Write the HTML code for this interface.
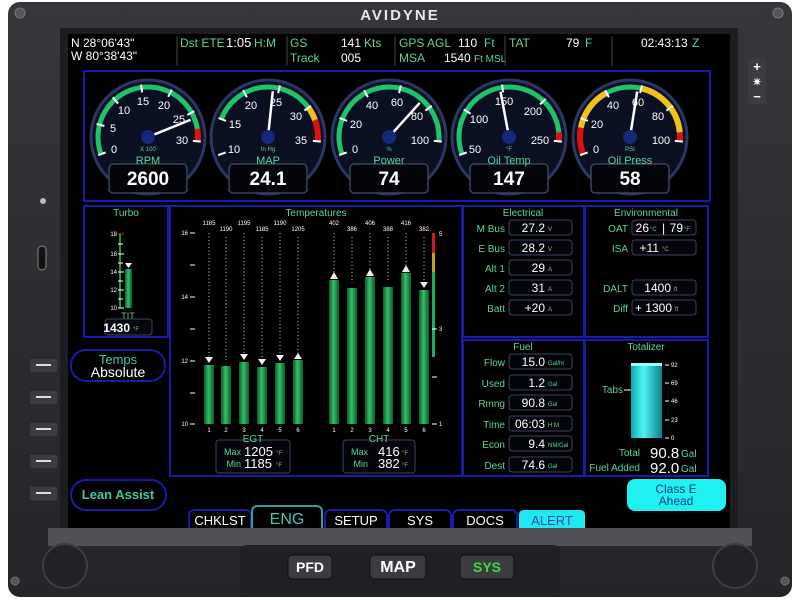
<!DOCTYPE html>
<html><head><meta charset="utf-8"><style>
html,body{margin:0;padding:0;background:#fff;width:800px;height:600px;overflow:hidden}
svg{display:block}
text{font-family:"Liberation Sans Narrow","Liberation Sans",sans-serif}
.g{fill:#5fd394}.w{fill:#fff}.b{font-weight:bold}
</style></head><body>
<svg width="800" height="600" viewBox="0 0 800 600" xmlns="http://www.w3.org/2000/svg">
<defs>
<linearGradient id="bar" x1="0" x2="1" y1="0" y2="0"><stop offset="0" stop-color="#0b5b2c"/><stop offset=".45" stop-color="#31c266"/><stop offset="1" stop-color="#0b5b2c"/></linearGradient>
<linearGradient id="cy" x1="0" x2="1" y1="0" y2="0"><stop offset="0" stop-color="#0aa8b0"/><stop offset=".4" stop-color="#4ff4f4"/><stop offset="1" stop-color="#0a8088"/></linearGradient>
<linearGradient id="bz" x1="0" x2="0" y1="0" y2="1"><stop offset="0" stop-color="#35373b"/><stop offset="1" stop-color="#232528"/></linearGradient>
</defs>
<!-- bezel -->
<rect x="8" y="2" width="784" height="595" rx="12" fill="url(#bz)"/>
<rect x="60" y="28" width="678" height="508" fill="#1c1d20"/>
<rect x="48" y="528" width="704" height="18" fill="#505256"/>
<rect x="240" y="545" width="320" height="48" rx="6" fill="#1e2023"/>
<circle cx="20" cy="13" r="5" fill="#555" stroke="#777"/>
<circle cx="778" cy="13" r="5" fill="#555" stroke="#777"/>
<circle cx="15" cy="581" r="4" fill="#555" stroke="#777"/>
<circle cx="785" cy="581" r="4" fill="#555" stroke="#777"/>
<text x="400" y="20" text-anchor="middle" font-size="15" font-weight="bold" fill="#e8e8e8" letter-spacing="2" style="font-family:'Liberation Sans',sans-serif">AVIDYNE</text>
<circle cx="43" cy="201" r="3" fill="#bbb"/>
<rect x="38" y="246" width="8" height="24" rx="4" fill="#111" stroke="#888"/>
<g fill="#3a3c40" stroke="#222">
<rect x="29" y="358" width="29" height="15" rx="2"/><rect x="29" y="390" width="29" height="15" rx="2"/><rect x="29" y="422" width="29" height="15" rx="2"/><rect x="29" y="454" width="29" height="15" rx="2"/><rect x="29" y="486" width="29" height="15" rx="2"/>
</g>
<g stroke="#ddd" stroke-width="2"><line x1="36" y1="365" x2="51" y2="365"/><line x1="36" y1="397" x2="51" y2="397"/><line x1="36" y1="429" x2="51" y2="429"/><line x1="36" y1="461" x2="51" y2="461"/><line x1="36" y1="493" x2="51" y2="493"/></g>
<rect x="748" y="58" width="18" height="46" rx="3" fill="#3a3c40"/>
<text x="757" y="71" text-anchor="middle" font-size="13" fill="#fff" class="b">+</text>
<text x="757" y="86" text-anchor="middle" font-size="12" fill="#fff">✷</text>
<text x="757" y="101" text-anchor="middle" font-size="13" fill="#fff" class="b">−</text>
<circle cx="65" cy="566" r="22" fill="#202225" stroke="#3c3e42" stroke-width="2"/>
<circle cx="735" cy="566" r="22" fill="#202225" stroke="#3c3e42" stroke-width="2"/>
<g font-size="14" class="b" text-anchor="middle">
<rect x="288" y="555" width="44" height="24" rx="4" fill="#3a3c40" stroke="#111"/><text x="310" y="572" fill="#fff">PFD</text>
<rect x="370" y="555" width="56" height="24" rx="4" fill="#3a3c40" stroke="#111"/><text x="398" y="572" fill="#fff" font-size="16">MAP</text>
<rect x="460" y="555" width="54" height="24" rx="4" fill="#3a3c40" stroke="#111"/><text x="487" y="572" fill="#3ddc3d">SYS</text>
</g>
<!-- screen -->
<rect x="68" y="34" width="662" height="494" fill="#000"/>
<!-- top bar -->
<g font-size="12">
<text x="71" y="47" class="w">N 28°06'43"</text><text x="71" y="60" class="w">W 80°38'43"</text>
<text x="180" y="47" class="g">Dst ETE</text><text x="226" y="47" class="w" font-size="13">1:05</text><text x="254" y="47" class="g">H:M</text>
<text x="290" y="47" class="g">GS</text><text x="341" y="47" class="w">141</text><text x="364" y="47" class="g">Kts</text>
<text x="290" y="62" class="g">Track</text><text x="341" y="62" class="w">005</text>
<text x="399" y="47" class="g">GPS AGL</text><text x="458" y="47" class="w">110</text><text x="484" y="47" class="g">Ft</text>
<text x="399" y="62" class="g">MSA</text><text x="444" y="62" class="w">1540</text><text x="474" y="62" class="g" font-size="10">Ft MSL</text>
<text x="509" y="47" class="g">TAT</text><text x="566" y="47" class="w">79</text><text x="585" y="47" class="g">F</text>
<text x="641" y="47" class="w">02:43:13</text><text x="692" y="47" class="g">Z</text>
</g>
<g stroke="#444" stroke-width="1"><line x1="177" y1="36" x2="177" y2="66"/><line x1="287" y1="36" x2="287" y2="66"/><line x1="395" y1="36" x2="395" y2="66"/><line x1="505" y1="36" x2="505" y2="66"/><line x1="612" y1="36" x2="612" y2="66"/></g>
<!-- panels -->
<g fill="none" stroke="#1a1aa8" stroke-width="2">
<rect x="84" y="71" width="626" height="130"/>
<rect x="84" y="206" width="84" height="131"/>
<rect x="170" y="206" width="292" height="270"/>
<rect x="463" y="206" width="121" height="131"/>
<rect x="585" y="206" width="123" height="131"/>
<rect x="463" y="340" width="121" height="136"/>
<rect x="585" y="340" width="123" height="136"/>
</g>
<!-- gauges -->
<g id="gauges" font-size="11">
<!-- RPM -->
<g transform="translate(148,137)">
<circle r="57" fill="#0a0f22" stroke="#2a3766" stroke-width="3"/>
<path d="M-47 17.1A50 50 0 1 1 49.8 4.4" pathLength="205" fill="none" stroke="#1ec46a" stroke-width="5"/>
<path d="M-47 17.1A50 50 0 1 1 49.8 4.4" pathLength="205" fill="none" stroke="#e01010" stroke-width="6" stroke-dasharray="0 191 14 300"/>
<g stroke="#fff" stroke-width="2"><line x1="45" x2="53" transform="rotate(-200)"/><line x1="45" x2="53" transform="rotate(-165.8)"/><line x1="45" x2="53" transform="rotate(-131.7)"/><line x1="45" x2="53" transform="rotate(-97.5)"/><line x1="45" x2="53" transform="rotate(-63.3)"/><line x1="45" x2="53" transform="rotate(-29.2)"/><line x1="45" x2="53" transform="rotate(5)"/></g>
<g class="w" text-anchor="middle"><text x="-34" y="16">0</text><text x="-35" y="-5">5</text><text x="-24" y="-23">10</text><text x="-5" y="-32">15</text><text x="16" y="-28">20</text><text x="31" y="-14">25</text><text x="34" y="7">30</text></g>
<line x1="0" y1="0" x2="46" y2="0" stroke="#fff" stroke-width="2.5" transform="rotate(-22)"/>
<circle r="7" fill="#16287a"/>
<text y="14" text-anchor="middle" font-size="6" class="g">X 100</text>
<rect x="-39" y="27" width="78" height="29" rx="4" fill="#03050a" stroke="#3a4460" stroke-width="1.5"/>
<text y="27" text-anchor="middle" class="g">RPM</text>
<text y="48" text-anchor="middle" font-size="19" class="w b">2600</text>
</g>
<!-- MAP -->
<g transform="translate(268,137)">
<circle r="57" fill="#0a0f22" stroke="#2a3766" stroke-width="3"/>
<path d="M-47 17.1A50 50 0 1 1 49.8 4.4" pathLength="205" fill="none" stroke="#1ec46a" stroke-width="5" stroke-dasharray="0 41 123 300"/>
<path d="M-47 17.1A50 50 0 1 1 49.8 4.4" pathLength="205" fill="none" stroke="#f0c020" stroke-width="6" stroke-dasharray="0 164 16.4 300"/>
<path d="M-47 17.1A50 50 0 1 1 49.8 4.4" pathLength="205" fill="none" stroke="#e01010" stroke-width="6" stroke-dasharray="0 180.4 24.6 300"/>
<g stroke="#fff" stroke-width="2"><line x1="45" x2="53" transform="rotate(-200)"/><line x1="45" x2="53" transform="rotate(-159)"/><line x1="45" x2="53" transform="rotate(-118)"/><line x1="45" x2="53" transform="rotate(-77)"/><line x1="45" x2="53" transform="rotate(-36)"/><line x1="45" x2="53" transform="rotate(5)"/></g>
<g class="w" text-anchor="middle"><text x="-34" y="16">10</text><text x="-33" y="-9">15</text><text x="-17" y="-28">20</text><text x="8" y="-31">25</text><text x="28" y="-17">30</text><text x="33" y="7">35</text></g>
<line x1="0" y1="0" x2="46" y2="0" stroke="#fff" stroke-width="2.5" transform="rotate(-84)"/>
<circle r="7" fill="#16287a"/>
<text y="14" text-anchor="middle" font-size="6" class="g">In Hg</text>
<rect x="-39" y="27" width="78" height="29" rx="4" fill="#03050a" stroke="#3a4460" stroke-width="1.5"/>
<text y="27" text-anchor="middle" class="g">MAP</text>
<text y="48" text-anchor="middle" font-size="19" class="w b">24.1</text>
</g>
<!-- Power -->
<g transform="translate(389,137)">
<circle r="57" fill="#0a0f22" stroke="#2a3766" stroke-width="3"/>
<path d="M-47 17.1A50 50 0 1 1 49.8 4.4" pathLength="205" fill="none" stroke="#1ec46a" stroke-width="5"/>
<g stroke="#fff" stroke-width="2"><line x1="45" x2="53" transform="rotate(-200)"/><line x1="45" x2="53" transform="rotate(-159)"/><line x1="45" x2="53" transform="rotate(-118)"/><line x1="45" x2="53" transform="rotate(-77)"/><line x1="45" x2="53" transform="rotate(-36)"/><line x1="45" x2="53" transform="rotate(5)"/></g>
<g class="w" text-anchor="middle"><text x="-34" y="16">0</text><text x="-33" y="-9">20</text><text x="-17" y="-28">40</text><text x="8" y="-31">60</text><text x="28" y="-17">80</text><text x="31" y="7">100</text></g>
<line x1="0" y1="0" x2="46" y2="0" stroke="#fff" stroke-width="2.5" transform="rotate(-48)"/>
<circle r="7" fill="#16287a"/>
<text y="14" text-anchor="middle" font-size="6" class="g">%</text>
<rect x="-39" y="27" width="78" height="29" rx="4" fill="#03050a" stroke="#3a4460" stroke-width="1.5"/>
<text y="27" text-anchor="middle" class="g">Power</text>
<text y="48" text-anchor="middle" font-size="19" class="w b">74</text>
</g>
<!-- Oil Temp -->
<g transform="translate(509,137)">
<circle r="57" fill="#0a0f22" stroke="#2a3766" stroke-width="3"/>
<path d="M-47 17.1A50 50 0 1 1 49.8 4.4" pathLength="205" fill="none" stroke="#1ec46a" stroke-width="5"/>
<path d="M-47 17.1A50 50 0 1 1 49.8 4.4" pathLength="205" fill="none" stroke="#e01010" stroke-width="6" stroke-dasharray="0 195 10 300"/>
<g stroke="#fff" stroke-width="2"><line x1="45" x2="53" transform="rotate(-200)"/><line x1="45" x2="53" transform="rotate(-148.75)"/><line x1="45" x2="53" transform="rotate(-97.5)"/><line x1="45" x2="53" transform="rotate(-46.25)"/><line x1="45" x2="53" transform="rotate(5)"/></g>
<g class="w" text-anchor="middle"><text x="-34" y="16">50</text><text x="-30" y="-14">100</text><text x="-5" y="-32">150</text><text x="24" y="-22">200</text><text x="31" y="7">250</text></g>
<line x1="0" y1="0" x2="46" y2="0" stroke="#fff" stroke-width="2.5" transform="rotate(-100.6)"/>
<circle r="7" fill="#16287a"/>
<text y="14" text-anchor="middle" font-size="6" class="g">°F</text>
<rect x="-39" y="27" width="78" height="29" rx="4" fill="#03050a" stroke="#3a4460" stroke-width="1.5"/>
<text y="27" text-anchor="middle" class="g">Oil Temp</text>
<text y="48" text-anchor="middle" font-size="19" class="w b">147</text>
</g>
<!-- Oil Press -->
<g transform="translate(630,137)">
<circle r="57" fill="#0a0f22" stroke="#2a3766" stroke-width="3"/>
<path d="M-47 17.1A50 50 0 1 1 49.8 4.4" pathLength="205" fill="none" stroke="#1ec46a" stroke-width="5"/>
<path d="M-47 17.1A50 50 0 1 1 49.8 4.4" pathLength="205" fill="none" stroke="#f0c020" stroke-width="6" stroke-dasharray="0 30.75 51.25 41 71.75 300"/>
<path d="M-47 17.1A50 50 0 1 1 49.8 4.4" pathLength="205" fill="none" stroke="#e01010" stroke-width="6" stroke-dasharray="30.75 164.25 10 300"/>
<g stroke="#fff" stroke-width="2"><line x1="45" x2="53" transform="rotate(-200)"/><line x1="45" x2="53" transform="rotate(-159)"/><line x1="45" x2="53" transform="rotate(-118)"/><line x1="45" x2="53" transform="rotate(-77)"/><line x1="45" x2="53" transform="rotate(-36)"/><line x1="45" x2="53" transform="rotate(5)"/></g>
<g class="w" text-anchor="middle"><text x="-34" y="16">0</text><text x="-33" y="-9">20</text><text x="-17" y="-28">40</text><text x="8" y="-31">60</text><text x="28" y="-17">80</text><text x="31" y="7">100</text></g>
<line x1="0" y1="0" x2="46" y2="0" stroke="#fff" stroke-width="2.5" transform="rotate(-81)"/>
<circle r="7" fill="#16287a"/>
<text y="14" text-anchor="middle" font-size="6" class="g">PSI</text>
<rect x="-39" y="27" width="78" height="29" rx="4" fill="#03050a" stroke="#3a4460" stroke-width="1.5"/>
<text y="27" text-anchor="middle" class="g">Oil Press</text>
<text y="48" text-anchor="middle" font-size="19" class="w b">58</text>
</g>
</g>
<!-- Turbo -->
<text x="126" y="216" text-anchor="middle" font-size="10" class="g">Turbo</text>
<line x1="120" y1="234" x2="120" y2="308" stroke="#2ec060" stroke-width="1.5"/>
<g stroke="#fff" stroke-width="1"><line x1="118" y1="234" x2="124" y2="234" stroke="#e02020"/><line x1="118" y1="244" x2="123" y2="244"/><line x1="118" y1="254" x2="124" y2="254"/><line x1="118" y1="263" x2="123" y2="263"/><line x1="118" y1="272" x2="124" y2="272"/><line x1="118" y1="281" x2="123" y2="281"/><line x1="118" y1="290" x2="124" y2="290"/><line x1="118" y1="299" x2="123" y2="299"/><line x1="118" y1="308" x2="124" y2="308"/></g>
<g font-size="6" class="w" text-anchor="end"><text x="117" y="236">18</text><text x="117" y="256">16</text><text x="117" y="274">14</text><text x="117" y="292">12</text><text x="117" y="310">10</text></g>
<rect x="125" y="269" width="7" height="39" fill="url(#bar)"/>
<path d="M125 263h7l-3.5 5z" fill="#fff"/>
<text x="128" y="319" text-anchor="middle" font-size="9" class="g">TIT</text>
<rect x="105" y="319" width="47" height="16" rx="3" fill="#05070c" stroke="#3a4460"/>
<text x="130" y="332" text-anchor="end" font-size="12" class="w b">1430</text><text x="133" y="331" font-size="6" class="g">°F</text>
<!-- Temperatures -->
<text x="316" y="216" text-anchor="middle" font-size="10" class="g">Temperatures</text>
<g font-size="6" class="w" text-anchor="end"><text x="188" y="235">16</text><text x="188" y="299">14</text><text x="188" y="363">12</text><text x="188" y="426">10</text></g>
<g stroke="#fff" stroke-width="1"><line x1="190" y1="233" x2="195" y2="233"/><line x1="190" y1="265" x2="195" y2="265"/><line x1="190" y1="297" x2="195" y2="297"/><line x1="190" y1="329" x2="195" y2="329"/><line x1="190" y1="361" x2="195" y2="361"/><line x1="190" y1="393" x2="195" y2="393"/><line x1="190" y1="424" x2="195" y2="424"/></g>
<g stroke="#ccc" stroke-width="1" stroke-dasharray="1 2.5">
<line x1="209" y1="233" x2="209" y2="360"/><line x1="226" y1="237" x2="226" y2="360"/><line x1="244" y1="233" x2="244" y2="357"/><line x1="262" y1="237" x2="262" y2="361"/><line x1="280" y1="233" x2="280" y2="358"/><line x1="298" y1="237" x2="298" y2="355"/>
<line x1="334" y1="233" x2="334" y2="275"/><line x1="352" y1="237" x2="352" y2="283"/><line x1="370" y1="233" x2="370" y2="272"/><line x1="388" y1="237" x2="388" y2="282"/><line x1="406" y1="233" x2="406" y2="268"/><line x1="424" y1="237" x2="424" y2="285"/>
</g>
<g fill="url(#bar)">
<rect x="204" y="365" width="10" height="59"/><rect x="221" y="366" width="10" height="58"/><rect x="239" y="362" width="10" height="62"/><rect x="257" y="367" width="10" height="57"/><rect x="275" y="363" width="10" height="61"/><rect x="293" y="360" width="10" height="64"/>
<rect x="329" y="280" width="10" height="144"/><rect x="347" y="288" width="10" height="136"/><rect x="365" y="277" width="10" height="147"/><rect x="383" y="287" width="10" height="137"/><rect x="401" y="273" width="10" height="151"/><rect x="419" y="290" width="10" height="134"/>
</g>
<g fill="#eee">
<path d="M205 357h8l-4 6z"/><path d="M240 354h8l-4 6z"/><path d="M258 359h8l-4 6z"/><path d="M276 355h8l-4 6z"/><path d="M294 359h8l-4-6z"/>
<path d="M330 279h8l-4-7z"/><path d="M366 276h8l-4-7z"/><path d="M402 272h8l-4-7z"/><path d="M420 282h8l-4 6z"/>
</g>
<g font-size="6" class="w" text-anchor="middle">
<text x="209" y="225">1185</text><text x="226" y="231">1190</text><text x="244" y="225">1195</text><text x="262" y="231">1185</text><text x="280" y="225">1190</text><text x="298" y="231">1205</text>
<text x="334" y="225">402</text><text x="352" y="231">386</text><text x="370" y="225">406</text><text x="388" y="231">388</text><text x="406" y="225">416</text><text x="424" y="231">382</text>
<text x="209" y="432">1</text><text x="226" y="432">2</text><text x="244" y="432">3</text><text x="262" y="432">4</text><text x="280" y="432">5</text><text x="298" y="432">6</text>
<text x="334" y="432">1</text><text x="352" y="432">2</text><text x="370" y="432">3</text><text x="388" y="432">4</text><text x="406" y="432">5</text><text x="424" y="432">6</text>
</g>
<rect x="432" y="233" width="3" height="20" fill="#d01818"/><rect x="432" y="253" width="3" height="19" fill="#c8a020"/><rect x="432" y="272" width="3" height="85" fill="#1eb060"/>
<g stroke="#fff" stroke-width="1"><line x1="432" y1="329" x2="437" y2="329"/><line x1="432" y1="377" x2="437" y2="377"/><line x1="432" y1="424" x2="437" y2="424"/></g>
<g font-size="6" class="w"><text x="439" y="236">5</text><text x="439" y="331">3</text><text x="439" y="426">1</text></g>
<rect x="216" y="440" width="74" height="33" rx="3" fill="#03050a" stroke="#3a4460"/>
<text x="253" y="442" text-anchor="middle" font-size="10" class="g">EGT</text>
<text x="241" y="455" text-anchor="end" font-size="9" class="g">Max</text><text x="244" y="456" font-size="13" class="w">1205</text><text x="276" y="455" font-size="6" class="g">°F</text>
<text x="241" y="467" text-anchor="end" font-size="9" class="g">Min</text><text x="244" y="468" font-size="13" class="w">1185</text><text x="276" y="467" font-size="6" class="g">°F</text>
<rect x="343" y="440" width="72" height="33" rx="3" fill="#03050a" stroke="#3a4460"/>
<text x="379" y="442" text-anchor="middle" font-size="10" class="g">CHT</text>
<text x="368" y="455" text-anchor="end" font-size="9" class="g">Max</text><text x="378" y="456" font-size="13" class="w">416</text><text x="402" y="455" font-size="6" class="g">°F</text>
<text x="368" y="467" text-anchor="end" font-size="9" class="g">Min</text><text x="378" y="468" font-size="13" class="w">382</text><text x="402" y="467" font-size="6" class="g">°F</text>
<!-- Electrical -->
<text x="523" y="216" text-anchor="middle" font-size="10" class="g">Electrical</text>
<g fill="#03050a" stroke="#3a4460">
<rect x="509" y="220" width="63" height="15" rx="3"/><rect x="509" y="240" width="63" height="15" rx="3"/><rect x="509" y="260" width="63" height="15" rx="3"/><rect x="509" y="280" width="63" height="15" rx="3"/><rect x="509" y="300" width="63" height="15" rx="3"/>
<rect x="632" y="220" width="64" height="15" rx="3"/><rect x="632" y="240" width="64" height="15" rx="3"/><rect x="632" y="280" width="64" height="15" rx="3"/><rect x="632" y="300" width="64" height="15" rx="3"/>
<rect x="509" y="354" width="63" height="15" rx="3"/><rect x="509" y="375" width="63" height="15" rx="3"/><rect x="509" y="395" width="63" height="15" rx="3"/><rect x="509" y="416" width="63" height="15" rx="3"/><rect x="509" y="436" width="63" height="15" rx="3"/><rect x="509" y="457" width="63" height="15" rx="3"/>
</g>
<g font-size="10" class="g" text-anchor="end">
<text x="505" y="232">M Bus</text><text x="505" y="252">E Bus</text><text x="505" y="272">Alt 1</text><text x="505" y="292">Alt 2</text><text x="505" y="312">Batt</text>
<text x="628" y="232">OAT</text><text x="628" y="252">ISA</text><text x="628" y="292">DALT</text><text x="628" y="312">Diff</text>
<text x="505" y="366">Flow</text><text x="505" y="387">Used</text><text x="505" y="407">Rmng</text><text x="505" y="428">Time</text><text x="505" y="448">Econ</text><text x="505" y="469">Dest</text>
</g>
<g font-size="12" class="w" text-anchor="end">
<text x="545" y="232">27.2</text><text x="545" y="252">28.2</text><text x="545" y="272">29</text><text x="545" y="292">31</text><text x="545" y="312">+20</text>
<text x="659" y="252">+11</text><text x="671" y="292">1400</text><text x="672" y="312">+ 1300</text>
<text x="545" y="366">15.0</text><text x="545" y="387">1.2</text><text x="545" y="407">90.8</text><text x="545" y="428">06:03</text><text x="545" y="448">9.4</text><text x="545" y="469">74.6</text>
</g>
<text x="649" y="232" text-anchor="end" font-size="12" class="w">26</text><text x="650" y="231" font-size="6" class="g">°C</text><text x="662" y="232" font-size="12" class="w">|</text><text x="683" y="232" text-anchor="end" font-size="12" class="w">79</text><text x="684" y="231" font-size="6" class="g">°F</text>
<g font-size="6" class="g">
<text x="548" y="231">V</text><text x="548" y="251">V</text><text x="548" y="271">A</text><text x="548" y="291">A</text><text x="548" y="311">A</text>
<text x="662" y="251">°C</text><text x="674" y="291">ft</text><text x="675" y="311">ft</text>
<text x="548" y="365">Gal/hr</text><text x="548" y="386">Gal</text><text x="548" y="406">Gal</text><text x="548" y="427">H:M</text><text x="548" y="447">NM/Gal</text><text x="548" y="468">Gal</text>
</g>
<text x="646" y="216" text-anchor="middle" font-size="10" class="g">Environmental</text>
<text x="523" y="350" text-anchor="middle" font-size="10" class="g">Fuel</text>
<text x="646" y="350" text-anchor="middle" font-size="10" class="g">Totalizer</text>
<rect x="631" y="365" width="31" height="73" fill="url(#cy)"/>
<rect x="631" y="363" width="31" height="3" fill="#9ff"/>
<g stroke="#fff" stroke-width="1"><line x1="665" y1="365" x2="669" y2="365"/><line x1="665" y1="383" x2="669" y2="383"/><line x1="665" y1="401" x2="669" y2="401"/><line x1="665" y1="420" x2="669" y2="420"/><line x1="665" y1="438" x2="669" y2="438"/><line x1="624" y1="390" x2="631" y2="390"/></g>
<g font-size="6" class="w"><text x="671" y="367">92</text><text x="671" y="385">69</text><text x="671" y="403">46</text><text x="671" y="422">23</text><text x="671" y="440">0</text></g>
<text x="623" y="393" text-anchor="end" font-size="10" class="g">Tabs</text>
<text x="640" y="456" text-anchor="end" font-size="10" class="g">Total</text><text x="650" y="458" font-size="15" class="w">90.8</text><text x="681" y="457" font-size="10" class="g">Gal</text>
<text x="640" y="471" text-anchor="end" font-size="10" class="g">Fuel Added</text><text x="650" y="473" font-size="15" class="w">92.0</text><text x="681" y="472" font-size="10" class="g">Gal</text>
<!-- left softkey labels -->
<rect x="71" y="350" width="94" height="31" rx="15" fill="#000" stroke="#1a1aa8" stroke-width="2"/>
<text x="118" y="364" text-anchor="middle" font-size="13" fill="#3fc8a8">Temps</text>
<text x="118" y="377" text-anchor="middle" font-size="14" class="w">Absolute</text>
<rect x="71" y="480" width="95" height="30" rx="15" fill="#000" stroke="#1a1aa8" stroke-width="2"/>
<text x="118" y="499" text-anchor="middle" font-size="13" fill="#3fc8a8" class="b">Lean Assist</text>
<rect x="627" y="479" width="99" height="32" rx="8" fill="#1ff0f0"/>
<text x="676" y="493" text-anchor="middle" font-size="12" fill="#0a3a8a">Class E</text>
<text x="676" y="505" text-anchor="middle" font-size="12" fill="#0a3a8a">Ahead</text>
<!-- tabs -->
<g fill="#000" stroke="#1a1aa8" stroke-width="2">
<path d="M189 528v-12q0-5 5-6h52q5 1 5 6v12"/>
<path d="M325 528v-12q0-5 5-6h52q5 1 5 6v12"/>
<path d="M389 528v-12q0-5 5-6h52q5 1 5 6v12"/>
<path d="M453 528v-12q0-5 5-6h54q5 1 5 6v12"/>
</g>
<path d="M252 528v-16q0-6 6-6h58q6 0 6 6v16" fill="#000" stroke="#2aa0a0" stroke-width="2"/>
<path d="M519 528v-13q0-5 5-5h56q5 0 5 5v13z" fill="#20e8f0"/>
<g font-size="13" text-anchor="middle">
<text x="220" y="525" class="w">CHKLST</text><text x="287" y="524" fill="#3fc8b8" font-size="16">ENG</text><text x="356" y="525" class="w">SETUP</text><text x="420" y="525" class="w">SYS</text><text x="485" y="525" class="w">DOCS</text><text x="552" y="525" fill="#1a50b0">ALERT</text>
</g>
</svg>
</body></html>
